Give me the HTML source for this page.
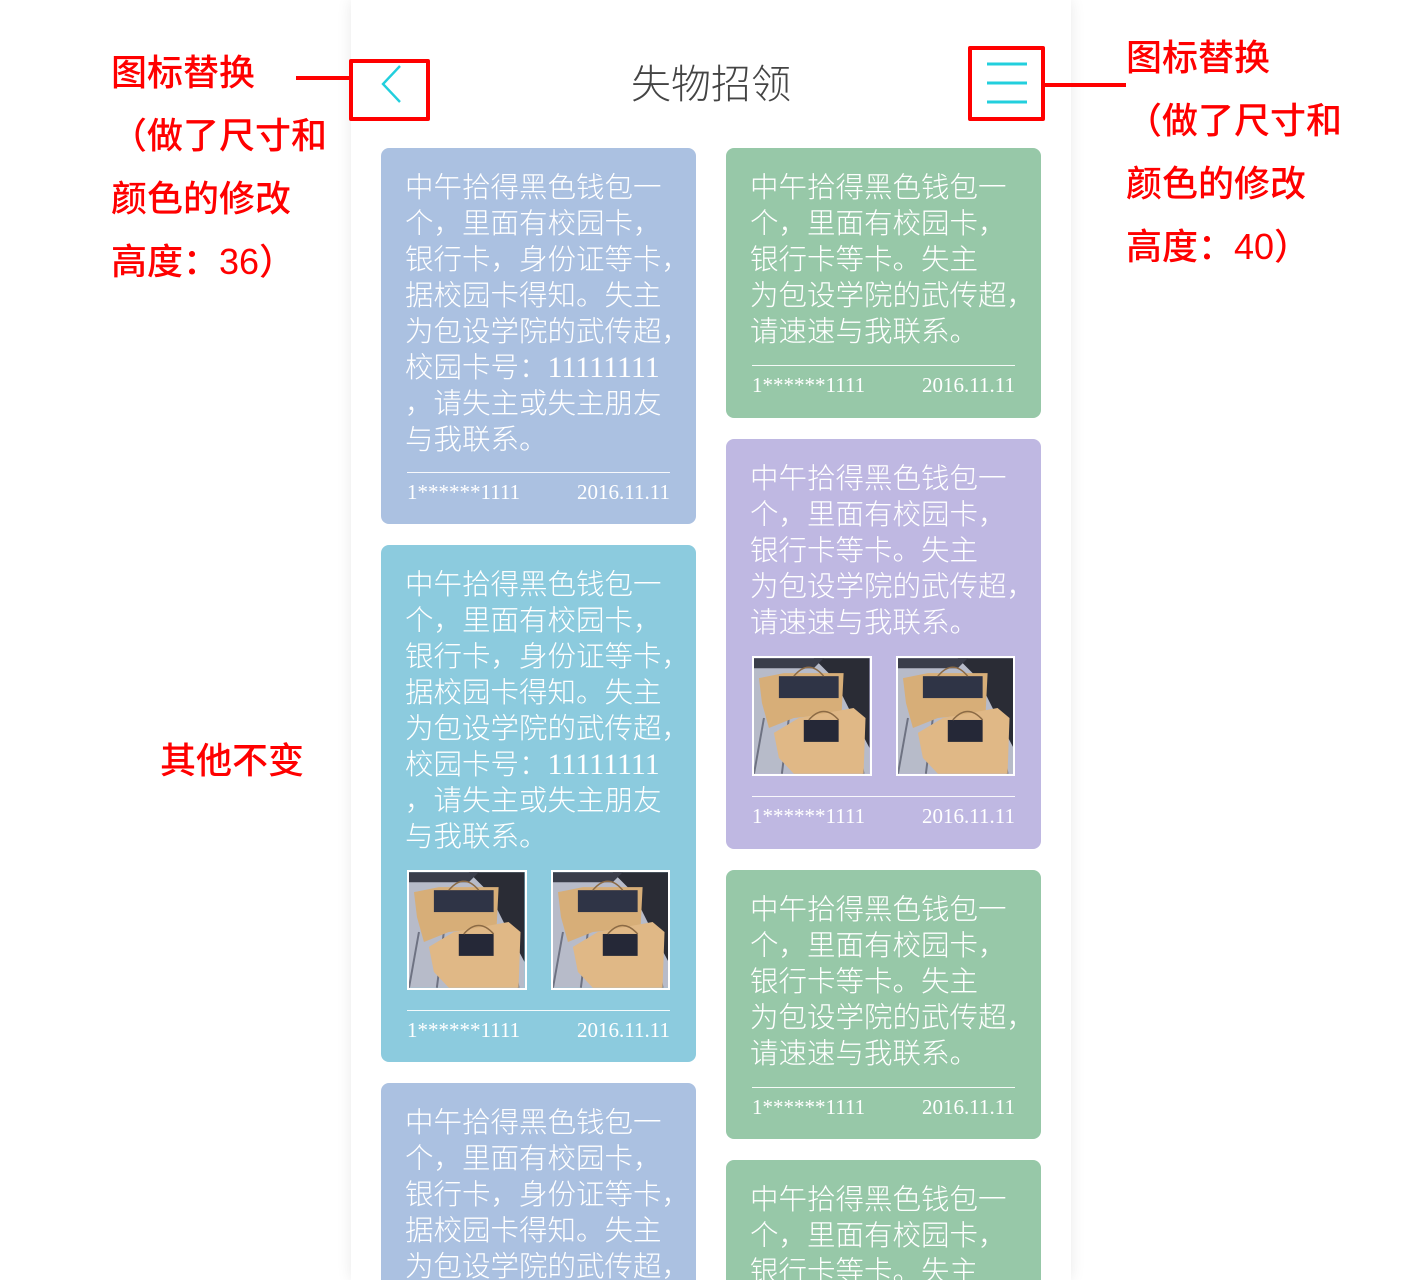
<!DOCTYPE html>
<html><head><meta charset="utf-8">
<style>
*{margin:0;padding:0;box-sizing:border-box}
html{width:1422px;height:1280px;overflow:hidden}
body{width:1422px;height:1280px;background:#fff;position:relative;overflow:hidden;font-family:"Liberation Sans","Noto Sans CJK SC",sans-serif}
.panel{position:absolute;left:351px;top:0;width:720px;height:1280px;background:#fff;box-shadow:0 0 14px rgba(0,0,0,.09)}
.title{position:absolute;left:0;width:1422px;top:58px;text-align:center;font-size:40px;color:#444;font-weight:300;line-height:54px}
.card{position:absolute;width:315px;border-radius:8px;padding:22px 26px 0 24px;color:#fff;overflow:hidden}
.card .t{font-size:28.5px;line-height:36px;font-weight:300;white-space:nowrap}
.n{font-family:"Liberation Serif",serif;font-size:30px}
.imgs{display:flex;gap:24px;margin-top:15px;margin-left:2px}
.img{width:120px;height:120px;border:2px solid #fff;overflow:hidden;display:block}
.foot{margin-left:2px;border-top:1px solid rgba(255,255,255,.9);display:flex;justify-content:space-between;font-family:"Liberation Serif",serif;font-size:21px;line-height:38px;height:52px}
.red{position:absolute;color:#f00;font-size:36px;font-weight:500;line-height:40px;white-space:nowrap}
.box{position:absolute;border:4px solid #f00;border-radius:2px}
.ln{position:absolute;background:#f00;height:4px}
</style></head><body>
<div class="panel"></div>
<div class="title">失物招领</div>
<svg style="position:absolute;left:378px;top:64px" width="28" height="40" viewBox="0 0 28 40"><path d="M22 2 L5 20 L22 38" fill="none" stroke="#22cfdd" stroke-width="2.4"/></svg>
<svg style="position:absolute;left:985px;top:60px" width="44" height="46"><g stroke="#22cfdd" stroke-width="3"><line x1="2" y1="4" x2="42" y2="4"/><line x1="2" y1="23" x2="42" y2="23"/><line x1="2" y1="42" x2="42" y2="42"/></g></svg>

<div class="box" style="left:349px;top:59px;width:81px;height:62px"></div>
<div class="box" style="left:968px;top:46px;width:77px;height:75px"></div>
<div class="ln" style="left:296px;top:76px;width:54px"></div>
<div class="ln" style="left:1044px;top:83px;width:82px"></div>

<div class="red" style="left:111px;top:53px">图标替换</div>
<div class="red" style="left:111px;top:116px">（做了尺寸和</div>
<div class="red" style="left:111px;top:179px">颜色的修改</div>
<div class="red" style="left:111px;top:242px">高度：36）</div>
<div class="red" style="left:1126px;top:38px">图标替换</div>
<div class="red" style="left:1126px;top:101px">（做了尺寸和</div>
<div class="red" style="left:1126px;top:164px">颜色的修改</div>
<div class="red" style="left:1126px;top:227px">高度：40）</div>
<div class="red" style="left:160px;top:741px">其他不变</div>

<div class="card" style="left:381px;top:148px;height:376px;background:#abc1e1">
<div class="t">中午拾得黑色钱包一<br>个，里面有校园卡，<br>银行卡，身份证等卡，<br>据校园卡得知。失主<br>为包设学院的武传超，<br>校园卡号：<span class="n">11111111</span><br>，请失主或失主朋友<br>与我联系。</div>
<div class="foot" style="margin-top:14px"><span>1******1111</span><span>2016.11.11</span></div></div>

<div class="card" style="left:381px;top:545px;height:517px;background:#8ccbde">
<div class="t">中午拾得黑色钱包一<br>个，里面有校园卡，<br>银行卡，身份证等卡，<br>据校园卡得知。失主<br>为包设学院的武传超，<br>校园卡号：<span class="n">11111111</span><br>，请失主或失主朋友<br>与我联系。</div>
<div class="imgs">
<svg class="img" viewBox="0 0 116 116"><rect width="116" height="116" fill="#b7bbc9"/><g stroke="#6e7282" stroke-width="2"><line x1="10" y1="60" x2="0" y2="116"/><line x1="35" y1="60" x2="28" y2="116"/><line x1="100" y1="60" x2="110" y2="116"/></g><polygon points="60,0 116,0 116,90 100,60 80,20" fill="#2a2c35"/><polygon points="0,0 70,0 60,10 0,10" fill="#3a3d4a"/><polygon points="5,20 30,15 90,15 88,55 40,60 15,70 8,45" fill="#d7ae78"/><rect x="25" y="18" width="60" height="22" fill="#2f3446"/><polygon points="20,75 45,60 100,50 112,60 110,116 40,116 25,100" fill="#e0b886"/><rect x="50" y="62" width="35" height="22" fill="#252837"/><path d="M55 62 Q70 45 85 62" fill="none" stroke="#8b6a45" stroke-width="1.5"/><path d="M40 18 Q55 0 70 18" fill="none" stroke="#8b6a45" stroke-width="1.5"/></svg>
<svg class="img" viewBox="0 0 116 116"><rect width="116" height="116" fill="#b7bbc9"/><g stroke="#6e7282" stroke-width="2"><line x1="10" y1="60" x2="0" y2="116"/><line x1="35" y1="60" x2="28" y2="116"/><line x1="100" y1="60" x2="110" y2="116"/></g><polygon points="60,0 116,0 116,90 100,60 80,20" fill="#2a2c35"/><polygon points="0,0 70,0 60,10 0,10" fill="#3a3d4a"/><polygon points="5,20 30,15 90,15 88,55 40,60 15,70 8,45" fill="#d7ae78"/><rect x="25" y="18" width="60" height="22" fill="#2f3446"/><polygon points="20,75 45,60 100,50 112,60 110,116 40,116 25,100" fill="#e0b886"/><rect x="50" y="62" width="35" height="22" fill="#252837"/><path d="M55 62 Q70 45 85 62" fill="none" stroke="#8b6a45" stroke-width="1.5"/><path d="M40 18 Q55 0 70 18" fill="none" stroke="#8b6a45" stroke-width="1.5"/></svg>
</div>
<div class="foot" style="margin-top:20px"><span>1******1111</span><span>2016.11.11</span></div></div>

<div class="card" style="left:381px;top:1083px;height:197px;border-radius:8px 8px 0 0;background:#abc1e1">
<div class="t">中午拾得黑色钱包一<br>个，里面有校园卡，<br>银行卡，身份证等卡，<br>据校园卡得知。失主<br>为包设学院的武传超，</div></div>

<div class="card" style="left:726px;top:148px;height:270px;background:#97c8a8">
<div class="t">中午拾得黑色钱包一<br>个，里面有校园卡，<br>银行卡等卡。失主<br>为包设学院的武传超，<br>请速速与我联系。</div>
<div class="foot" style="margin-top:15px"><span>1******1111</span><span>2016.11.11</span></div></div>

<div class="card" style="left:726px;top:439px;height:410px;background:#bfb8e2">
<div class="t">中午拾得黑色钱包一<br>个，里面有校园卡，<br>银行卡等卡。失主<br>为包设学院的武传超，<br>请速速与我联系。</div>
<div class="imgs">
<svg class="img" viewBox="0 0 116 116"><rect width="116" height="116" fill="#b7bbc9"/><g stroke="#6e7282" stroke-width="2"><line x1="10" y1="60" x2="0" y2="116"/><line x1="35" y1="60" x2="28" y2="116"/><line x1="100" y1="60" x2="110" y2="116"/></g><polygon points="60,0 116,0 116,90 100,60 80,20" fill="#2a2c35"/><polygon points="0,0 70,0 60,10 0,10" fill="#3a3d4a"/><polygon points="5,20 30,15 90,15 88,55 40,60 15,70 8,45" fill="#d7ae78"/><rect x="25" y="18" width="60" height="22" fill="#2f3446"/><polygon points="20,75 45,60 100,50 112,60 110,116 40,116 25,100" fill="#e0b886"/><rect x="50" y="62" width="35" height="22" fill="#252837"/><path d="M55 62 Q70 45 85 62" fill="none" stroke="#8b6a45" stroke-width="1.5"/><path d="M40 18 Q55 0 70 18" fill="none" stroke="#8b6a45" stroke-width="1.5"/></svg>
<svg class="img" viewBox="0 0 116 116"><rect width="116" height="116" fill="#b7bbc9"/><g stroke="#6e7282" stroke-width="2"><line x1="10" y1="60" x2="0" y2="116"/><line x1="35" y1="60" x2="28" y2="116"/><line x1="100" y1="60" x2="110" y2="116"/></g><polygon points="60,0 116,0 116,90 100,60 80,20" fill="#2a2c35"/><polygon points="0,0 70,0 60,10 0,10" fill="#3a3d4a"/><polygon points="5,20 30,15 90,15 88,55 40,60 15,70 8,45" fill="#d7ae78"/><rect x="25" y="18" width="60" height="22" fill="#2f3446"/><polygon points="20,75 45,60 100,50 112,60 110,116 40,116 25,100" fill="#e0b886"/><rect x="50" y="62" width="35" height="22" fill="#252837"/><path d="M55 62 Q70 45 85 62" fill="none" stroke="#8b6a45" stroke-width="1.5"/><path d="M40 18 Q55 0 70 18" fill="none" stroke="#8b6a45" stroke-width="1.5"/></svg>
</div>
<div class="foot" style="margin-top:20px"><span>1******1111</span><span>2016.11.11</span></div></div>

<div class="card" style="left:726px;top:870px;height:269px;background:#97c8a8">
<div class="t">中午拾得黑色钱包一<br>个，里面有校园卡，<br>银行卡等卡。失主<br>为包设学院的武传超，<br>请速速与我联系。</div>
<div class="foot" style="margin-top:15px"><span>1******1111</span><span>2016.11.11</span></div></div>

<div class="card" style="left:726px;top:1160px;height:120px;border-radius:8px 8px 0 0;background:#97c8a8">
<div class="t">中午拾得黑色钱包一<br>个，里面有校园卡，<br>银行卡等卡。失主</div></div>
</body></html>
